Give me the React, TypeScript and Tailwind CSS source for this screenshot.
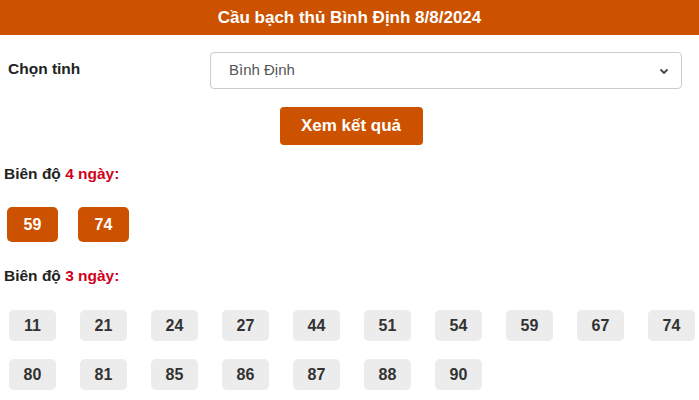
import React from 'react';

const hot = ['59', '74'];
const warm = ['11', '21', '24', '27', '44', '51', '54', '59', '67', '74', '80', '81', '85', '86', '87', '88', '90'];

const App = () => {
  return (
    <div className="w-[699px] h-[400px] bg-white overflow-hidden font-['Liberation_Sans',Arial,sans-serif] text-[#333]">
      {/* Title bar */}
      <div className="h-[35px] bg-[#cc5200] flex items-center justify-center">
        <h1 className="text-white font-bold text-[17px] leading-none">Cầu bạch thủ Bình Định 8/8/2024</h1>
      </div>

      {/* Province picker */}
      <div className="flex items-center mt-[17px]">
        <label className="w-[210px] pl-2 text-[15.5px] font-bold text-[#222] -mt-1">Chọn tỉnh</label>
        <div className="relative w-[472px] h-[37px] border border-[#ccc] rounded-[4px] flex items-center pl-[18px] text-[15px] text-[#555]">
          Bình Định
          <svg className="absolute right-[12px] top-[15px]" width="10" height="7" viewBox="0 0 10 7">
            <path d="M1.5 1.5 L5 5 L8.5 1.5" fill="none" stroke="#444" strokeWidth="1.8" />
          </svg>
        </div>
      </div>

      <div className="flex justify-center mt-[18px] pl-[3px]">
        <button className="w-[143px] h-[38px] rounded-[4px] bg-[#cc5200] text-white font-bold text-[17px]">Xem kết quả</button>
      </div>

      {/* Results */}
      <p className="mt-[17px] pl-1 text-[15.5px] leading-[24px] font-bold text-[#222]">
        Biên độ <span className="text-[#d0021b]">4 ngày:</span>
      </p>
      <div className="flex gap-[20px] pl-[7px] mt-[21px]">
        {hot.map((n) => (
          <div key={n} className="w-[51px] h-[35px] rounded-[5px] bg-[#cc5200] text-white font-bold text-[16px] flex items-center justify-center">
            {n}
          </div>
        ))}
      </div>

      <p className="mt-[22px] pl-1 text-[15.5px] leading-[24px] font-bold text-[#222]">
        Biên độ <span className="text-[#d0021b]">3 ngày:</span>
      </p>
      <div className="flex flex-wrap gap-x-[24px] gap-y-[18px] pl-[9px] mt-[22px] w-[699px]">
        {warm.map((n, i) => (
          <div key={i} className="w-[47px] h-[31px] rounded-[5px] bg-[#ececec] text-[#333] font-bold text-[16px] flex items-center justify-center">
            {n}
          </div>
        ))}
      </div>
    </div>
  );
};

export default App;
